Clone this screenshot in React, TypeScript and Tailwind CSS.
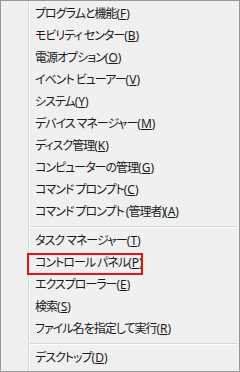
import React from "react";

type Item = { label: string; key: string; boxed?: boolean };

const groups: Item[][] = [
  [
    { label: "プログラムと機能", key: "F" },
    { label: "モビリティ センター", key: "B" },
    { label: "電源オプション", key: "O" },
    { label: "イベント ビューアー", key: "V" },
    { label: "システム", key: "Y" },
    { label: "デバイス マネージャー", key: "M" },
    { label: "ディスク管理", key: "K" },
    { label: "コンピューターの管理", key: "G" },
    { label: "コマンド プロンプト", key: "C" },
    { label: "コマンド プロンプト (管理者)", key: "A" },
  ],
  [
    { label: "タスク マネージャー", key: "T" },
    { label: "コントロール パネル", key: "P", boxed: true },
    { label: "エクスプローラー", key: "E" },
    { label: "検索", key: "S" },
    { label: "ファイル名を指定して実行", key: "R" },
  ],
  [{ label: "デスクトップ", key: "D" }],
];

function Row({ item }: { item: Item }) {
  return (
    <div className="relative h-[22px] flex items-center pl-[5px]">
      {item.boxed && (
        <div className="absolute -left-[3px] top-[1px] w-[116px] h-[22px] border-2 border-[#e4141b] pointer-events-none" />
      )}
      <span className="whitespace-nowrap">
        <span className="tracking-[-1px]">{item.label}</span>
        <span>
          (<span className="underline underline-offset-[1px]">{item.key}</span>)
        </span>
      </span>
    </div>
  );
}

function Sep() {
  return (
    <div className="h-[7px] flex flex-col justify-center pr-[2px]">
      <div className="h-px bg-[#d7d7d7]" />
      <div className="h-px bg-white" />
    </div>
  );
}

export default function App() {
  return (
    <div
      className="w-[240px] h-[372px] bg-[#f0f0f0] border border-[#979797] flex overflow-hidden text-[12px] text-[#1a1a1a] [font-feature-settings:'palt']"
      style={{ fontFamily: '"Noto Sans", "Noto Sans CJK JP", sans-serif' }}
    >
      <div className="w-[28px] shrink-0 border-r border-[#d7d7d7]" />
      <div className="flex-1 flex flex-col pt-[2px] border-l border-white">
        {groups.map((g, gi) => (
          <React.Fragment key={gi}>
            {gi > 0 && <Sep />}
            {g.map((it, i) => (
              <Row key={i} item={it} />
            ))}
          </React.Fragment>
        ))}
      </div>
    </div>
  );
}
